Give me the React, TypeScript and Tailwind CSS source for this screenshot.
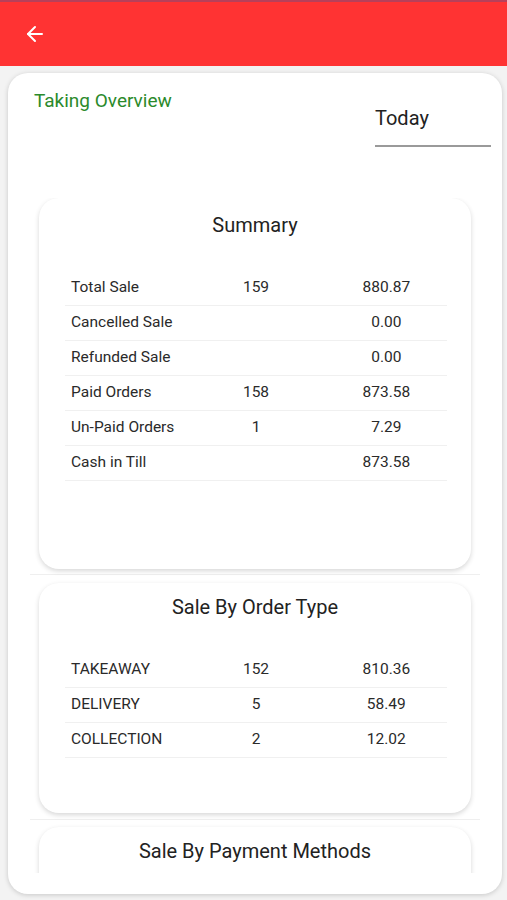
import { ArrowLeft } from 'lucide-react';

type Row = { label: string; count?: string; amount: string };

const summary: Row[] = [
  { label: 'Total Sale', count: '159', amount: '880.87' },
  { label: 'Cancelled Sale', amount: '0.00' },
  { label: 'Refunded Sale', amount: '0.00' },
  { label: 'Paid Orders', count: '158', amount: '873.58' },
  { label: 'Un-Paid Orders', count: '1', amount: '7.29' },
  { label: 'Cash in Till', amount: '873.58' },
];

const orderTypes: Row[] = [
  { label: 'TAKEAWAY', count: '152', amount: '810.36' },
  { label: 'DELIVERY', count: '5', amount: '58.49' },
  { label: 'COLLECTION', count: '2', amount: '12.02' },
];

function StatCard({ title, rows, top, bottom }: { title: string; rows: Row[]; top: string; bottom: string }) {
  return (
    <div className={`mx-[9px] rounded-[20px] bg-white shadow-[0_2px_5px_rgba(0,0,0,0.16)] ${top} ${bottom}`}>
      <h3 className="text-center text-[20px] leading-[28px] text-[#222]">{title}</h3>
      <div className="ml-[26px] mr-[24px] mt-[32px]">
        {rows.map(r => (
          <div key={r.label} className="grid h-[35px] grid-cols-3 items-center border-b border-[#f0f0f0] text-[15.5px] text-[#2a2a2a]">
            <span className="pl-[6px]">{r.label}</span>
            <span className="text-center">{r.count ?? ''}</span>
            <span className="pl-[6px] text-center">{r.amount}</span>
          </div>
        ))}
      </div>
    </div>
  );
}

export default function App() {
  return (
    <div className="h-[900px] w-full overflow-hidden bg-[#f3f3f3] font-['Roboto',sans-serif]">
      {/* app bar */}
      <div className="flex h-[66px] items-center border-t-2 border-[#b8405a] bg-[#ff3333] pl-[23px]">
        <ArrowLeft className="h-[24px] w-[24px] text-white" strokeWidth={2} />
      </div>

      <div className="pl-[8px] pr-[5px] pt-[7px]">
        <div className="flex h-[821px] flex-col overflow-hidden rounded-[20px] bg-white shadow-[0_1px_5px_rgba(0,0,0,0.18)]">
          <div className="flex justify-between pl-[26px] pr-[11px] pt-[15px]">
            <span className="text-[19px] leading-[26px] text-[#2b8a2b]">Taking Overview</span>
            <div className="mt-[16px] w-[116px] border-b-2 border-[#9a9a9a] pb-[13px]">
              <span className="text-[20px] leading-[28px] text-[#222]">Today</span>
            </div>
          </div>

          {/* scroll list */}
          <div className="mx-[22px] mt-[51px] mb-[21px] flex-1 overflow-hidden">
            <div className="border-b border-[#efefef] pb-[5px]">
              <StatCard title="Summary" rows={summary} top="pt-[13px]" bottom="pb-[88px]" />
            </div>
            <div className="border-b border-[#efefef] pt-[8px] pb-[6px]">
              <StatCard title="Sale By Order Type" rows={orderTypes} top="pt-[10px]" bottom="pb-[55px]" />
            </div>
            <div className="pt-[7px]">
              <StatCard title="Sale By Payment Methods" rows={[]} top="pt-[10px]" bottom="pb-[60px]" />
            </div>
          </div>
        </div>
      </div>
    </div>
  );
}
